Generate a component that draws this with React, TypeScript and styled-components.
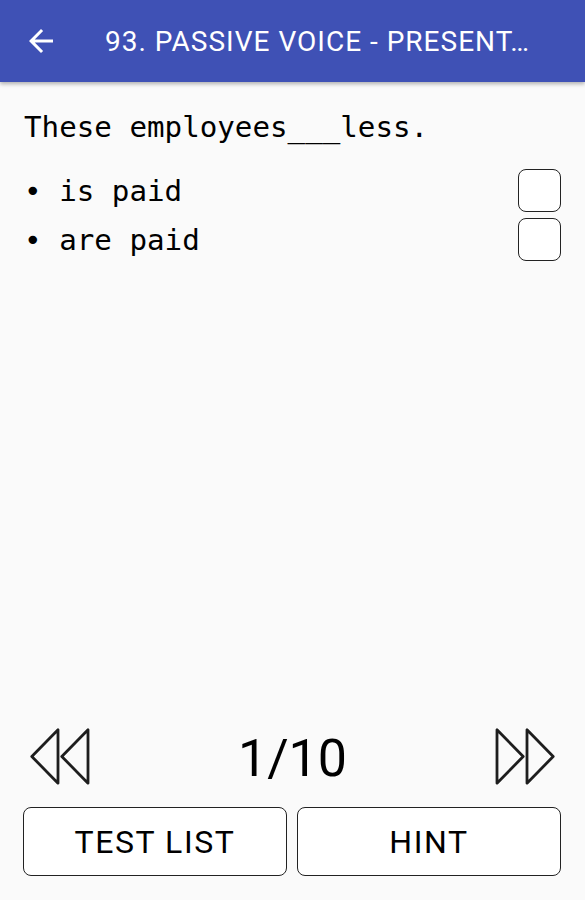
import styled, { createGlobalStyle } from "styled-components";

const GlobalStyle = createGlobalStyle`
  html, body {
    margin: 0;
    padding: 0;
    background: #fafafa;
  }
  * {
    box-sizing: border-box;
  }
`;

const Screen = styled.div`
  display: flex;
  flex-direction: column;
  width: 100%;
  height: 100vh;
  background: #fafafa;
  overflow: hidden;
`;

const AppBar = styled.div`
  position: relative;
  z-index: 1;
  display: flex;
  align-items: center;
  flex-shrink: 0;
  height: 82px;
  padding-left: 23px;
  background: #3f51b5;
  box-shadow: 0 2px 4px rgba(0, 0, 0, 0.3);
`;

const BackButton = styled.div`
  display: flex;
  width: 36px;
  height: 36px;
  margin-right: 46px;
`;

const Title = styled.div`
  flex: 1;
  min-width: 0;
  color: #fff;
  font-family: Roboto, "Liberation Sans", sans-serif;
  font-size: 28px;
  letter-spacing: 1px;
  white-space: nowrap;
  overflow: hidden;
`;

const Content = styled.div`
  flex: 1;
  padding: 27px 24px 0 24px;
`;

const Question = styled.div`
  font-family: "DejaVu Sans Mono", "Liberation Mono", monospace;
  font-size: 29.2px;
  line-height: 36px;
  color: #000;
  margin-bottom: 21px;
`;

const Option = styled.div`
  display: flex;
  align-items: center;
  justify-content: space-between;
  height: 49px;
  font-family: "DejaVu Sans Mono", "Liberation Mono", monospace;
  font-size: 29.2px;
  line-height: 36px;
  color: #000;
  white-space: pre;
`;

const CheckBox = styled.div`
  width: 43px;
  height: 43px;
  border: 1.5px solid #222;
  border-radius: 8px;
  background: #fff;
`;

const Footer = styled.div`
  display: flex;
  flex-direction: column;
  flex-shrink: 0;
  padding: 0 24px 24px 23px;
`;

const Pager = styled.div`
  display: flex;
  align-items: center;
  justify-content: space-between;
  height: 62px;
  margin-bottom: 19px;
  padding: 0 6px 0 7px;
`;

const PageCount = styled.div`
  font-family: Roboto, "Liberation Sans", sans-serif;
  font-size: 52px;
  color: #000;
  margin-top: 3px;
`;

const ButtonRow = styled.div`
  display: grid;
  grid-template-columns: 1fr 1fr;
  gap: 10px;
`;

const Button = styled.div`
  display: flex;
  align-items: center;
  justify-content: center;
  height: 69px;
  border: 1.5px solid #222;
  border-radius: 8px;
  background: #fff;
  font-family: Roboto, "Liberation Sans", sans-serif;
  font-size: 32px;
  letter-spacing: 1.6px;
  color: #000;
`;

const DoubleArrow = ({ dir }: { dir: "left" | "right" }) => (
  <svg
    width="62"
    height="58"
    viewBox="0 0 62 58"
    style={{ transform: dir === "right" ? "scaleX(-1)" : undefined }}
  >
    <g fill="none" stroke="#1e1e1e" strokeWidth="2.8" strokeLinejoin="round">
      <path d="M1.8 28.5 L28 1.8 L28 55.2 Z" />
      <path d="M31.8 28.5 L58 1.8 L58 55.2 Z" />
    </g>
  </svg>
);

export default function App() {
  const options = ["is paid", "are paid"];

  return (
    <>
      <GlobalStyle />
      <Screen>
        <AppBar>
          <BackButton>
            <svg width="36" height="36" viewBox="0 0 24 24">
              <path
                fill="#fff"
                d="M20 11H7.83l5.59-5.59L12 4l-8 8 8 8 1.41-1.41L7.83 13H20v-2z"
              />
            </svg>
          </BackButton>
          <Title>93. PASSIVE VOICE - PRESENT…</Title>
        </AppBar>

        <Content>
          <Question>These employees___less.</Question>
          {options.map((o) => (
            <Option key={o}>
              <span>{"• " + o}</span>
              <CheckBox />
            </Option>
          ))}
        </Content>

        <Footer>
          <Pager>
            <DoubleArrow dir="left" />
            <PageCount>1/10</PageCount>
            <DoubleArrow dir="right" />
          </Pager>
          <ButtonRow>
            <Button>TEST LIST</Button>
            <Button>HINT</Button>
          </ButtonRow>
        </Footer>
      </Screen>
    </>
  );
}
